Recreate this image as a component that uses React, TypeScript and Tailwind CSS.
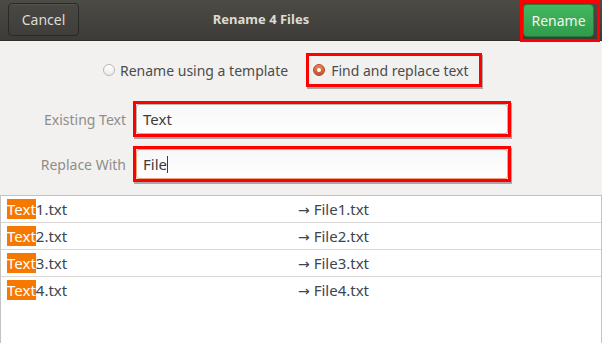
import React from 'react'

const files = [1, 2, 3, 4]

export default function App() {
  return (
    <div
      className="w-[602px] h-[343px] bg-[#f2f1f0] flex flex-col overflow-hidden"
      style={{ fontFamily: '"Noto Sans", "Open Sans", sans-serif' }}
    >
      {/* header bar */}
      <div className="h-[41px] shrink-0 flex items-start bg-gradient-to-b from-[#4d4b46] to-[#3c3b37] border-b border-[#2f2e2b]">
        <button className="ml-[8px] mt-[3px] w-[71px] h-[33px] rounded-[4px] border border-[#2a2926] bg-gradient-to-b from-[#4a4843] to-[#3f3e3a] text-[14px] text-[#dfdbd2] shadow-[inset_0_1px_0_rgba(255,255,255,0.06)]">
          Cancel
        </button>
        <div className="flex-1 h-[40px] flex items-center justify-center pr-[77px] text-[13px] font-bold text-[#dfdbd2]">
          Rename 4 Files
        </div>
        <div className="w-[80px] h-[42px] mr-[2px] border-[3px] border-[#ff0000] flex items-start">
          <button className="mt-[1px] w-[71px] h-[33px] rounded-[4px] border border-[#2a7a3c] bg-gradient-to-b from-[#44b660] to-[#2f9c4b] text-[14px] text-[#f4f4f0]">
            Rename
          </button>
        </div>
      </div>

      {/* mode switch */}
      <div className="mt-[12px] pl-[103px] flex items-center text-[14px] text-[#4c4c4c]">
        <span className="w-[12px] h-[12px] rounded-full border border-[#b8b7b3] bg-gradient-to-b from-white to-[#ecebe9]" />
        <span className="ml-[5px]">Rename using a template</span>
        <div className="ml-[18px] h-[34px] pl-[4px] pr-[10px] border-[3px] border-[#ff0000] flex items-center shadow-[1px_2px_0_rgba(0,0,0,0.3)]">
          <span className="w-[12px] h-[12px] rounded-full bg-gradient-to-b from-[#e8835a] to-[#c8522a] border border-[#b4461f] flex items-center justify-center">
            <span className="w-[4px] h-[4px] rounded-full bg-white" />
          </span>
          <span className="ml-[6px]">Find and replace text</span>
        </div>
      </div>

      {/* fields */}
      <div className="mt-[14px] flex flex-col gap-[9px] text-[14px]">
        <div className="flex items-center">
          <div className="w-[126px] text-right text-[#8f8d89]">Existing Text</div>
          <div className="ml-[7px] w-[378px] h-[36px] border-[3px] border-[#ff0000] shadow-[1px_2px_0_rgba(0,0,0,0.3)]">
            <div className="w-full h-full rounded-[3px] border border-[#b6b5b2] bg-gradient-to-b from-[#f7f7f7] to-white pl-[6px] flex items-center text-[15px] text-[#3c3c3c]">
              Text
            </div>
          </div>
        </div>
        <div className="flex items-center">
          <div className="w-[126px] text-right text-[#8f8d89]">Replace With</div>
          <div className="ml-[7px] w-[378px] h-[36px] border-[3px] border-[#ff0000] shadow-[1px_2px_0_rgba(0,0,0,0.3)]">
            <div className="w-full h-full rounded-[3px] border border-[#f0a47f] bg-gradient-to-b from-[#f7f7f7] to-white pl-[6px] flex items-center text-[15px] text-[#3c3c3c]">
              File<span className="w-px h-[17px] bg-[#3c3c3c]" />
            </div>
          </div>
        </div>
      </div>

      {/* preview list */}
      <div className="mt-[13px] flex-1 bg-white border-t border-x border-[#c4c3c0] text-[15px] text-[#3d4550]">
        {files.map((n) => (
          <div
            key={n}
            className={`h-[27px] flex items-center ${n < 4 ? 'border-b border-[#d8d7d5]' : ''}`}
          >
            <div className="w-[297px] pl-[6px]">
              <span className="bg-[#f57900] text-white">Text</span>
              {n}.txt
            </div>
            <div>
              <span style={{ fontFamily: '"DejaVu Sans", sans-serif' }} className="text-[14px]">→</span> File{n}.txt
            </div>
          </div>
        ))}
      </div>
    </div>
  )
}
